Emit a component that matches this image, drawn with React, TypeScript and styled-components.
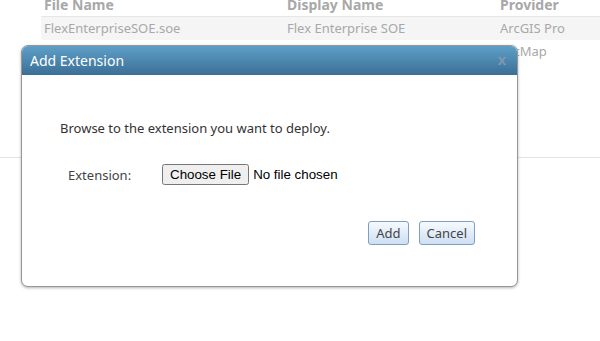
import React from "react";
import styled, { createGlobalStyle } from "styled-components";

const Global = createGlobalStyle`
  html, body { margin: 0; padding: 0; background: #fff; }
  body { width: 600px; height: 341px; overflow: hidden; position: relative; font-family: "Noto Sans", "DejaVu Sans", sans-serif; }
`;

const Page = styled.div`
  position: relative;
  width: 600px;
  height: 341px;
  overflow: hidden;
`;

const Section = styled.div`
  display: flex;
  flex-direction: column;
  height: 158px;
  border-bottom: 1px solid #e3e3e3;
  padding-left: 41px;
  box-sizing: border-box;
`;

const Table = styled.div`
  margin-top: -6px;
  display: grid;
  grid-template-columns: 243px 213px 1fr;
`;

const HeadCell = styled.div`
  height: 22px;
  line-height: 22px;
  padding-left: 3px;
  font-size: 14px;
  font-weight: bold;
  color: #a8a8a8;
  border-bottom: 1px solid #e6e6e6;
`;

const Cell = styled.div<{ $alt?: boolean }>`
  height: 23px;
  line-height: 23px;
  padding-left: 3px;
  font-size: 13px;
  color: #a8a8a8;
  background: ${(p) => (p.$alt ? "#f5f5f5" : "transparent")};
`;

const Dialog = styled.div`
  position: absolute;
  left: 21px;
  top: 45px;
  width: 497px;
  height: 242px;
  box-sizing: border-box;
  border: 1px solid #979797;
  border-radius: 7px;
  background: #fff;
  box-shadow: 0 1px 3px rgba(0, 0, 0, 0.3);
  overflow: hidden;
  display: flex;
  flex-direction: column;
`;

const TitleBar = styled.div`
  height: 29px;
  flex: none;
  display: flex;
  align-items: center;
  justify-content: space-between;
  padding: 0 11px 0 8px;
  background: linear-gradient(#5e9fc7, #3b6f96);
`;

const Title = styled.span`
  color: #fff;
  font-size: 14px;
`;

const Close = styled.span`
  color: #8199ad;
  font-size: 15px;
  font-weight: bold;
  font-family: "Liberation Sans", Arial, sans-serif;
  margin-top: -2px;
`;

const Body = styled.div`
  padding: 44px 0 0 38px;
  display: flex;
  flex-direction: column;
`;

const Intro = styled.p`
  margin: 0;
  font-size: 13px;
  color: #333;
`;

const FieldRow = styled.div`
  margin-top: 27px;
  display: flex;
  align-items: center;
  padding-left: 8px;
`;

const Label = styled.label`
  width: 94px;
  font-size: 13px;
  color: #444;
`;

const FileInput = styled.input`
  font-family: "Liberation Sans", Arial, sans-serif;
  font-size: 13.333px;
  color: #000;
`;

const Actions = styled.div`
  margin-top: 36px;
  display: flex;
  justify-content: flex-end;
  gap: 10px;
  padding-right: 42px;
`;

const Button = styled.button`
  height: 24px;
  padding: 0 7px;
  border: 1px solid #7d9fc4;
  border-radius: 3px;
  background: linear-gradient(#f6faff, #cddff2);
  color: #444;
  font-family: "Noto Sans", "DejaVu Sans", sans-serif;
  font-size: 13px;
`;

export default function App() {
  return (
    <Page>
      <Global />
      <Section>
        <Table>
          <HeadCell>File Name</HeadCell>
          <HeadCell>Display Name</HeadCell>
          <HeadCell>Provider</HeadCell>
          <Cell $alt>FlexEnterpriseSOE.soe</Cell>
          <Cell $alt>Flex Enterprise SOE</Cell>
          <Cell $alt>ArcGIS Pro</Cell>
          <Cell></Cell>
          <Cell></Cell>
          <Cell>ArcMap</Cell>
        </Table>
      </Section>
      <Dialog>
        <TitleBar>
          <Title>Add Extension</Title>
          <Close>x</Close>
        </TitleBar>
        <Body>
          <Intro>Browse to the extension you want to deploy.</Intro>
          <FieldRow>
            <Label>Extension:</Label>
            <FileInput type="file" />
          </FieldRow>
          <Actions>
            <Button>Add</Button>
            <Button>Cancel</Button>
          </Actions>
        </Body>
      </Dialog>
    </Page>
  );
}
